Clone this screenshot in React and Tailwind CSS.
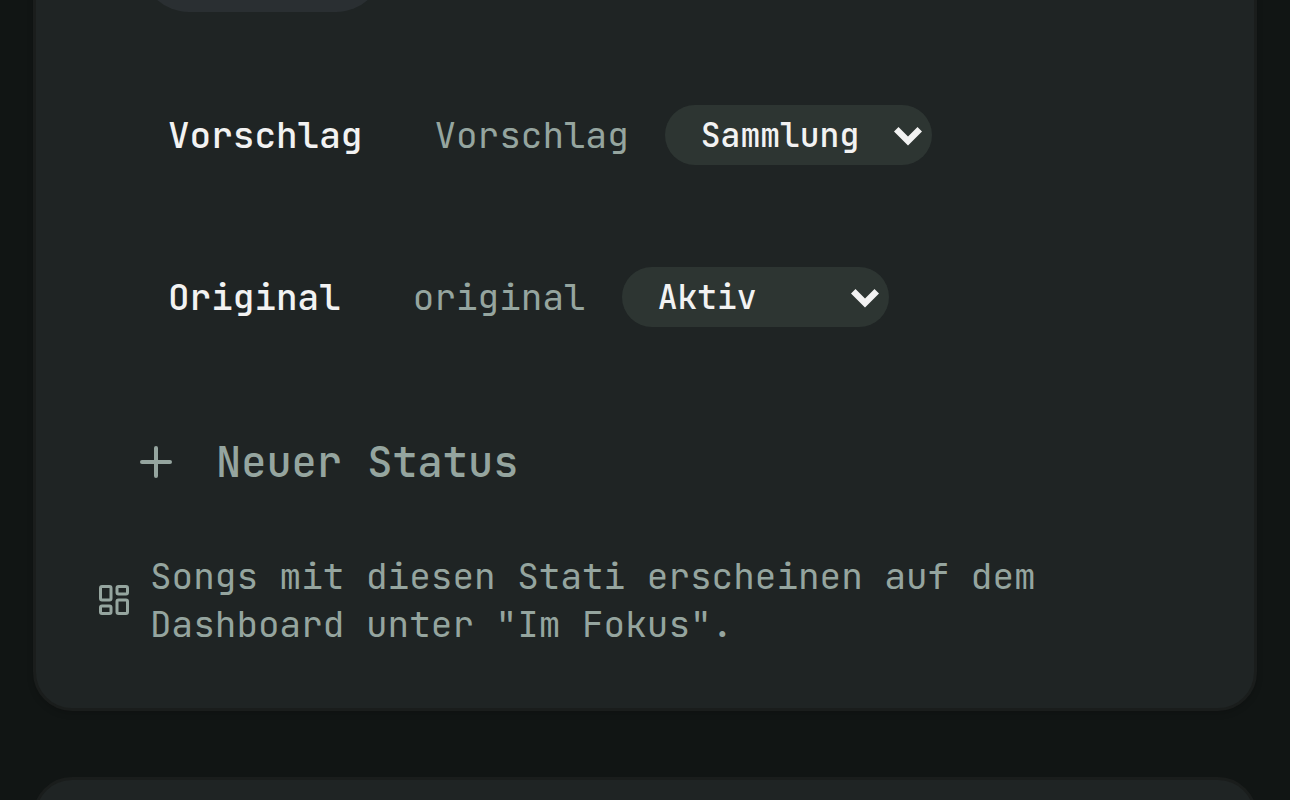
import { LayoutDashboard, Plus } from "lucide-react";

const OPTIONS = ["Sammlung", "Aktiv"];

function GroupSelect({ label, value }) {
  return (
    <div className="relative ml-9 h-[60px] w-[267px] shrink-0">
      <select
        aria-label={label}
        defaultValue={value}
        className="h-full w-full appearance-none rounded-full bg-[#2d3532] pr-12 pl-9 text-[33px] leading-10 font-medium text-[#f2f2f2]"
      >
        {OPTIONS.map((o) => (
          <option key={o}>{o}</option>
        ))}
      </select>
      <svg
        viewBox="0 0 28 19"
        aria-hidden="true"
        className="pointer-events-none absolute top-[22px] right-[10px] h-[19px] w-7 fill-[#f2f2f2]"
      >
        <path d="M0 4.5 4.5 0 14 9.5 23.5 0 28 4.5l-14 14z" />
      </svg>
    </div>
  );
}

function StatusRow({ name, alias, group }) {
  return (
    <li className="flex h-[162px] items-center pl-[72px]">
      <span className="font-medium text-[#f2f2f2]">{name}</span>
      <span className="ml-[72px]">{alias}</span>
      <GroupSelect label={`Gruppe für ${name}`} value={group} />
    </li>
  );
}

export default function App() {
  return (
    <main className="h-screen overflow-hidden bg-[#111514] px-[33px] font-['JetBrains_Mono','DejaVu_Sans_Mono',monospace] text-[36px] leading-[48px] text-[#95a59f]">
      <section className="-mt-[144px] rounded-[39px] border-[3px] border-[#1a1d1c] bg-[#1f2424] px-[60px] pt-[57px] pb-[60px] shadow-[0_3px_6px_rgba(0,0,0,0.15)]">
        <button
          type="button"
          aria-label="Bearbeiten"
          className="ml-[45px] block h-24 w-[243px] rounded-full bg-[#2a2f32]"
        />
        <ul className="mt-[42px]">
          <StatusRow name="Vorschlag" alias="Vorschlag" group="Sammlung" />
          <StatusRow name="Original" alias="original" group="Aktiv" />
        </ul>
        <button
          type="button"
          className="mt-[42px] ml-9 flex h-[84px] items-center gap-9 text-[42px] font-medium"
        >
          <Plus size={48} aria-hidden="true" />
          Neuer Status
        </button>
        <div className="mt-12 flex items-center gap-[18px]">
          <LayoutDashboard size={36} className="shrink-0" aria-hidden="true" />
          <p className="max-w-[920px]">
            Songs mit diesen Stati erscheinen auf dem Dashboard unter "Im
            Fokus".
          </p>
        </div>
      </section>
      <section className="mt-[66px] min-h-60 rounded-[39px] border-[3px] border-[#1a1d1c] bg-[#1f2424]" />
    </main>
  );
}
